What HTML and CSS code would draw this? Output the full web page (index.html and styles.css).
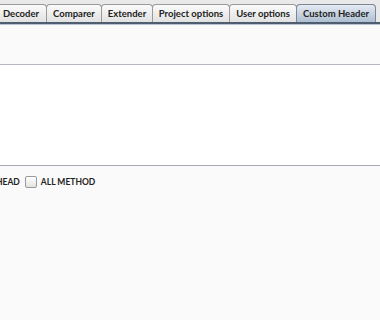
FILE: index.html
```html
<!DOCTYPE html>
<html lang="en">
<head>
    <meta charset="UTF-8">
    <title>Custom Header</title>
    <link rel="stylesheet" href="styles.css">
</head>
<body>
    <div class="tabbar">
        <ul class="tabs">
            <li class="tab decoder">Decoder</li>
            <li class="tab comparer">Comparer</li>
            <li class="tab extender">Extender</li>
            <li class="tab project">Project options</li>
            <li class="tab user">User options</li>
            <li class="tab custom active">Custom Header</li>
        </ul>
    </div>
    <div class="panel">
        <div class="top-band"></div>
        <div class="editor"></div>
        <div class="methods">
            <span class="method">HEAD</span>
            <label class="method">
                <span class="check"></span>
                ALL METHOD
            </label>
        </div>
    </div>
</body>
</html>
```

FILE: styles.css
```css
body {
    margin: 0;
    font-family: Lato, "DejaVu Sans", sans-serif;
    background-color: #fafafa;
    width: 380px;
    height: 320px;
    overflow: hidden;
}
.tabbar {
    background-color: #e9e9e9;
    padding-top: 4px;
    border-bottom: 2px solid #4f5d70;
}
.tabs {
    list-style-type: none;
    margin: 0 0 0 -5px;
    padding: 0;
    display: flex;
    white-space: nowrap;
}
.tab {
    box-sizing: border-box;
    font-size: 9.5px;
    font-weight: bold;
    color: #222;
    height: 18px;
    line-height: 18px;
    text-align: center;
    border: 1px solid #9a9a9a;
    border-bottom: none;
    border-radius: 4px 4px 0 0;
    background: linear-gradient(#fbfbfb, #e1e1e1);
    margin-right: -1px;
    flex: none;
}
.decoder { width: 52px; }
.comparer { width: 56px; }
.extender { width: 52px; }
.project { width: 78px; }
.user { width: 68px; }
.custom { width: 80px; }
.tab.active {
    background: linear-gradient(#e4eaf2, #aebfd1);
    border-color: #7b8797;
}
.panel {
    border-top: 1px solid #b8c4d4;
}
.top-band {
    height: 39px;
    background-color: #fafafa;
    border-bottom: 1px solid #b7b7c0;
}
.editor {
    height: 100px;
    background-color: #ffffff;
    border-bottom: 1px solid #a9aab8;
}
.methods {
    display: flex;
    align-items: center;
    gap: 5px;
    padding-top: 10px;
    margin-left: -4px;
}
.method {
    font-size: 8.5px;
    font-weight: bold;
    color: #222;
    display: flex;
    align-items: center;
    gap: 4px;
}
.check {
    width: 10px;
    height: 10px;
    border: 1px solid #9a9a9a;
    border-radius: 2px;
    background: linear-gradient(#ffffff, #e3e3e3);
}
```
